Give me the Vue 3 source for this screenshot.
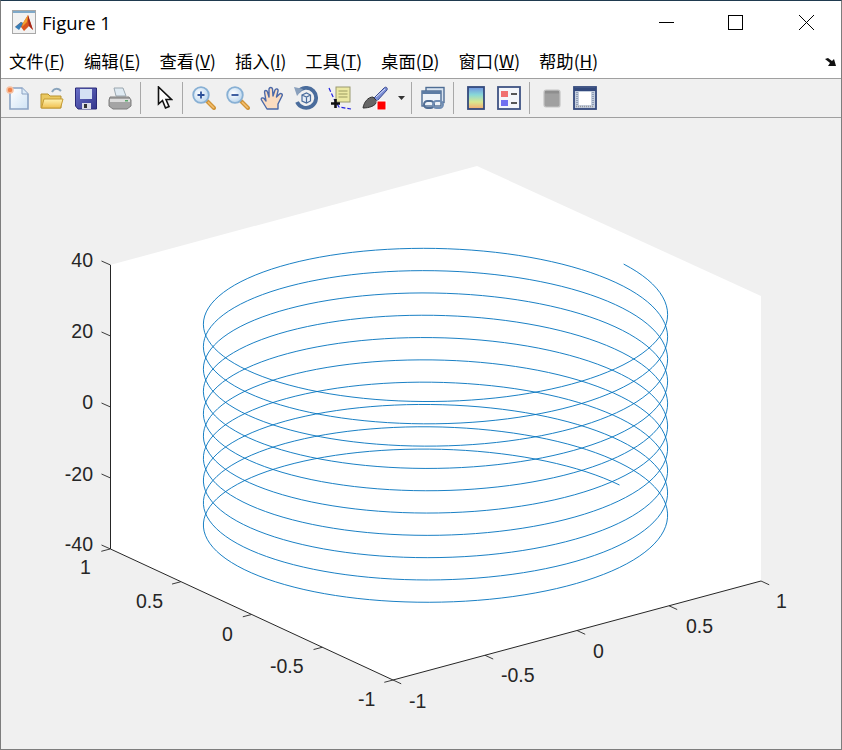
<template>
  <div class="window">
    <header class="titlebar">
      <svg class="logo" width="24" height="24" viewBox="0 0 24 24">
        <rect x="0.5" y="0.5" width="23" height="23" fill="#f2f2f2" stroke="#a8a8a8" />
        <rect x="1" y="1" width="22" height="2" fill="#7fa9c9" />
        <path d="M3 17 L9 12 L11 13 L16 5 L21 20 L17 16 L12 21 L9 17 Z" fill="#d9541e" />
        <path d="M3 17 L9 12 L11 13 L9 17 L7 20 Z" fill="#3a7fb8" />
        <path d="M16 5 L21 20 L17 16 L16 10 Z" fill="#a3281c" />
        <path d="M11 13 L16 5 L15 12 L10 17 Z" fill="#f0a030" />
      </svg>
      <span class="title">Figure 1</span>
      <div class="controls">
        <svg class="ctl" width="18" height="18" viewBox="0 0 18 18"><path d="M3 8.5 H18" stroke="#000" /></svg>
        <svg class="ctl" width="18" height="18" viewBox="0 0 18 18"><rect x="1.5" y="1.5" width="14" height="14" fill="none" stroke="#000" /></svg>
        <svg class="ctl" width="18" height="18" viewBox="0 0 18 18"><path d="M1 1 L16 16 M16 1 L1 16" stroke="#000" /></svg>
      </div>
    </header>

    <nav class="menubar">
      <span v-for="m in menus" :key="m.key" class="menu">{{ m.label }}(<u>{{ m.key }}</u>)</span>
      <svg class="dock" width="13" height="9" viewBox="0 0 13 9">
        <path d="M1 1 L4 0 L8 3 L10 1 L12 8 L4 8 L6 5 Z" fill="#111" />
      </svg>
    </nav>

    <div class="toolbar">
      <!-- new -->
      <svg class="tool" viewBox="0 0 24 24">
        <defs>
          <linearGradient id="pg" x1="0" y1="0" x2="1" y2="1"><stop offset="0" stop-color="#fff" /><stop offset="1" stop-color="#cfe3f5" /></linearGradient>
          <linearGradient id="fd" x1="0" y1="0" x2="0" y2="1"><stop offset="0" stop-color="#fff4b4" /><stop offset="1" stop-color="#f0c050" /></linearGradient>
          <linearGradient id="cb" x1="0" y1="0" x2="0" y2="1">
            <stop offset="0" stop-color="#6f90e0" /><stop offset="0.35" stop-color="#88d8d8" /><stop offset="0.68" stop-color="#d8e890" /><stop offset="1" stop-color="#f6a870" />
          </linearGradient>
          <radialGradient id="lens" cx="0.4" cy="0.4" r="0.7"><stop offset="0" stop-color="#fff" /><stop offset="1" stop-color="#b4d2ec" /></radialGradient>
          <linearGradient id="fl" x1="0" y1="0" x2="1" y2="1"><stop offset="0" stop-color="#6a70c8" /><stop offset="1" stop-color="#33368c" /></linearGradient>
        </defs>
        <path d="M4 2 H16 L22 8 V23 H4 Z" fill="url(#pg)" stroke="#8ba3c4" stroke-width="1.6" />
        <path d="M16 2 V8 H22" fill="#dcebf8" stroke="#8ba3c4" />
        <circle cx="4" cy="4" r="3" fill="#f0824a" stroke="#f6c0a0" stroke-width="1.5" />
      </svg>
      <!-- open -->
      <svg class="tool" viewBox="0 0 24 24">
        <path d="M12 6 C14 2 18 2 21 5" fill="none" stroke="#8aa4bc" stroke-width="2" />
        <path d="M1 8 H8 L10 10 H21 V22 H1 Z" fill="#eac860" stroke="#b8922e" />
        <path d="M1.5 22 L4 13 H23 L20.5 22 Z" fill="url(#fd)" stroke="#c49a34" />
      </svg>
      <!-- save -->
      <svg class="tool" viewBox="0 0 24 24">
        <path d="M1.5 2 H22.5 V23 H4 L1.5 20 Z" fill="url(#fl)" stroke="#2a2a78" />
        <rect x="6" y="3" width="12" height="10" fill="#d4e0f4" />
        <rect x="8" y="17" width="9" height="6" fill="#dcdce6" />
        <rect x="10" y="18" width="3" height="4" fill="#333" />
      </svg>
      <!-- print -->
      <svg class="tool" viewBox="0 0 24 24">
        <path d="M6 2 H15 L18 10 H8 Z" fill="#dfeaf2" stroke="#9aa6ae" />
        <path d="M2 11 H21 L23 14 V20 L19 23 H5 L1 20 V14 Z" fill="#a4a4a4" stroke="#7c7c7c" />
        <rect x="2" y="13" width="20" height="3" fill="#dcdcdc" />
        <rect x="17" y="14" width="3" height="1.5" fill="#5aa86a" />
      </svg>
      <i class="sep" />
      <!-- pointer -->
      <svg class="tool narrow" viewBox="0 0 16 24">
        <path d="M1.5 1 V18 L5.5 14.5 L8.5 22 L12 20.5 L9 13.5 H14.5 Z" fill="#fff" stroke="#111" stroke-width="1.6" />
      </svg>
      <i class="sep" />
      <!-- zoom in -->
      <svg class="tool" viewBox="0 0 24 24">
        <path d="M15 15 L22 22" stroke="#d09438" stroke-width="4" stroke-linecap="round" />
        <path d="M16 16 L22 22" stroke="#f6c070" stroke-width="1.5" />
        <circle cx="9" cy="9" r="7.8" fill="url(#lens)" stroke="#88b0d4" stroke-width="1.8" />
        <path d="M5.5 9 H12.5 M9 5.5 V12.5" stroke="#2c5098" stroke-width="1.8" />
      </svg>
      <!-- zoom out -->
      <svg class="tool" viewBox="0 0 24 24">
        <path d="M15 15 L22 22" stroke="#d09438" stroke-width="4" stroke-linecap="round" />
        <path d="M16 16 L22 22" stroke="#f6c070" stroke-width="1.5" />
        <circle cx="9" cy="9" r="7.8" fill="url(#lens)" stroke="#88b0d4" stroke-width="1.8" />
        <path d="M5.5 9 H12.5" stroke="#2c5098" stroke-width="1.8" />
      </svg>
      <!-- pan -->
      <svg class="tool" viewBox="0 0 24 24">
        <path d="M7 23 L1.5 14 C0.5 12 3 11 4.5 13 L6 15 L4.5 6 C4.5 4 7 4 7.5 6 L9 11 L9 3 C9.5 1 12 1 12.5 3 L13 10 L15 4 C16 2 18.5 3 18 5 L16.5 11 L19.5 8 C21 7 23 8 22 10 L18 18 V23 Z" fill="#fbdcc0" stroke="#4a68a8" stroke-width="1.4" stroke-linejoin="round" />
      </svg>
      <!-- rotate -->
      <svg class="tool" viewBox="0 0 24 24">
        <path d="M4 6 A10 10 0 1 1 3 16" fill="none" stroke="#4a6c9c" stroke-width="3.8" />
        <path d="M0 1 L9 3 L3 10 Z" fill="#8aa0bc" />
        <path d="M8 9 L12.5 7 L16.5 9 V15 L12.5 17 L8 15 Z M8 9 L12.5 11 L16.5 9 M12.5 11 V17" fill="#e8eef6" stroke="#4a6c9c" stroke-width="1.2" />
      </svg>
      <!-- data cursor -->
      <svg class="tool" viewBox="0 0 24 24">
        <path d="M1 2 L6 13 L11 21 L23 23" fill="none" stroke="#2020e0" stroke-width="1.2" stroke-dasharray="4 2" />
        <rect x="8" y="1" width="14" height="15" fill="#ece9a4" stroke="#9a9a70" />
        <path d="M10.5 5 H19.5 M10.5 8 H19.5 M10.5 11 H19.5" stroke="#9a9a60" />
        <path d="M7.5 13 V22 M3 17.5 H12" stroke="#111" stroke-width="2.6" />
      </svg>
      <!-- brush -->
      <svg class="tool wide" viewBox="0 0 28 24">
        <path d="M12 12 L22 2 C24 0 26 2 25 4 L15 15 Z" fill="#7a8ed6" stroke="#3a4a90" />
        <path d="M14 11 L23 3" stroke="#d8e0f8" />
        <path d="M1 22 C2 16 6 11 11 11 L15 15 C14 20 7 22 1 22 Z" fill="#666" stroke="#333" />
        <rect x="15" y="15" width="9" height="9" fill="#ff0000" stroke="#fff" />
      </svg>
      <svg class="caret" width="7" height="4" viewBox="0 0 7 4"><path d="M0 0 H7 L3.5 4 Z" fill="#333" /></svg>
      <i class="sep" />
      <!-- link -->
      <svg class="tool" viewBox="0 0 24 24">
        <rect x="5" y="1.5" width="18" height="15" fill="#d9e4f0" stroke="#4f6d94" stroke-width="1.4" />
        <rect x="1" y="5" width="19" height="15" fill="#eef3f8" stroke="#4f6d94" stroke-width="1.4" />
        <rect x="1" y="5" width="19" height="3" fill="#5c7ca4" />
        <rect x="3" y="15" width="10" height="7" rx="3.5" fill="none" stroke="#4f6d94" stroke-width="2" />
        <rect x="12" y="15" width="10" height="7" rx="3.5" fill="none" stroke="#6f8db4" stroke-width="2" />
      </svg>
      <i class="sep" />
      <!-- colorbar -->
      <svg class="tool slim" viewBox="0 0 18 24">
        <rect x="1" y="1" width="16" height="22" fill="url(#cb)" stroke="#33497c" stroke-width="1.8" />
      </svg>
      <!-- legend -->
      <svg class="tool" viewBox="0 0 24 24">
        <rect x="1" y="1" width="22" height="22" fill="#f4f6fa" stroke="#3f5383" stroke-width="1.8" />
        <rect x="4" y="5" width="7" height="6" fill="#f07070" />
        <rect x="4" y="14" width="7" height="6" fill="#7070f0" />
        <path d="M14 8 H20 M14 17 H20" stroke="#222" stroke-width="1.6" />
      </svg>
      <i class="sep" />
      <!-- hide tools -->
      <svg class="tool slim" viewBox="0 0 18 24">
        <rect x="1" y="4" width="16" height="17" rx="2" fill="#a0a0a0" stroke="#c4c4c4" stroke-width="1.2" />
        <rect x="2" y="5" width="14" height="2.5" fill="#8e8e8e" />
      </svg>
      <!-- plot tools -->
      <svg class="tool" viewBox="0 0 24 24">
        <rect x="1" y="1" width="22" height="22" fill="#c4cede" stroke="#33497c" stroke-width="1.8" />
        <rect x="1" y="2" width="22" height="3" fill="#33497c" />
        <rect x="6" y="6" width="12" height="13" fill="#fff" />
        <path d="M4 6 V19 M20 6 V19" stroke="#7f8ea8" stroke-width="1.5" stroke-dasharray="1 1" />
        <path d="M3 20.5 H21" stroke="#9a9a9a" stroke-width="1.5" stroke-dasharray="1 1" />
      </svg>
    </div>

    <svg class="plot" viewBox="1 118 840 631">
      <polygon points="110,265 477,166 761,296 761,581 393,680 110,549" fill="#fff" />
      <polyline :points="helix" fill="none" stroke="#0072bd" stroke-width="0.9" />
      <path d="M110.5 265 V549 L393 680 L761 581" fill="none" stroke="#262626" stroke-width="1" />
      <path v-for="(t, i) in ticks" :key="i" :d="t" fill="none" stroke="#262626" stroke-width="0.9" />
      <text v-for="l in labels" :key="l.text + l.x" :x="l.x" :y="l.y" :text-anchor="l.anchor" class="tick">{{ l.text }}</text>
    </svg>
  </div>
</template>

<script setup>
const menus = [
  { label: '文件', key: 'F' },
  { label: '编辑', key: 'E' },
  { label: '查看', key: 'V' },
  { label: '插入', key: 'I' },
  { label: '工具', key: 'T' },
  { label: '桌面', key: 'D' },
  { label: '窗口', key: 'W' },
  { label: '帮助', key: 'H' }
]

// projection read off the box corners
const project = (x, y, z) => [
  435.5 + 184 * x - 141.5 * y,
  565 - 49.5 * x - 65.5 * y - 3.55 * (z + 40)
]

const steps = 1200
const tStart = -10 * Math.PI
const tEnd = 10 * Math.PI - 0.03
const pts = []
for (let i = 0; i <= steps; i++) {
  const t = tStart + ((tEnd - tStart) * i) / steps
  const [px, py] = project(Math.cos(t), Math.sin(t), t)
  pts.push(px.toFixed(2) + ',' + py.toFixed(2))
}
const helix = pts.join(' ')

const ticks = []
for (const z of [40, 20, 0, -20, -40]) {
  const y = 549 - (z + 40) * 3.55
  ticks.push(`M110.5 ${y} L101.5 ${y - 4}`)
}
for (const v of [1, 0.5, 0, -0.5, -1]) {
  const [px, py] = project(-1, v, -40)
  ticks.push(`M${px} ${py} L${px - 8.7} ${py + 2.3}`)
}
for (const v of [-1, -0.5, 0, 0.5, 1]) {
  const [px, py] = project(v, -1, -40)
  ticks.push(`M${px} ${py} L${px + 8.2} ${py + 3.8}`)
}

const labels = [
  { text: '40', x: 93, y: 267, anchor: 'end' },
  { text: '20', x: 93, y: 338, anchor: 'end' },
  { text: '0', x: 93, y: 409, anchor: 'end' },
  { text: '-20', x: 93, y: 481, anchor: 'end' },
  { text: '-40', x: 93, y: 551, anchor: 'end' },
  { text: '1', x: 80, y: 574, anchor: 'start' },
  { text: '0.5', x: 136, y: 608, anchor: 'start' },
  { text: '0', x: 222, y: 641, anchor: 'start' },
  { text: '-0.5', x: 270, y: 673, anchor: 'start' },
  { text: '-1', x: 358, y: 706, anchor: 'start' },
  { text: '-1', x: 409, y: 708, anchor: 'start' },
  { text: '-0.5', x: 501, y: 682, anchor: 'start' },
  { text: '0', x: 593, y: 658, anchor: 'start' },
  { text: '0.5', x: 686, y: 633, anchor: 'start' },
  { text: '1', x: 776, y: 608, anchor: 'start' }
]
</script>

<style scoped>
.window {
  width: 842px;
  height: 750px;
  box-sizing: border-box;
  display: flex;
  flex-direction: column;
  background: #f0f0f0;
  border: 1px solid #7d7d7d;
  border-top-color: #1f3a4f;
  overflow: hidden;
}

.titlebar {
  height: 39px;
  flex: none;
  display: flex;
  align-items: center;
  padding-left: 11px;
  background: #fff;
}

.logo {
  margin-top: 3px;
}

.title {
  margin-left: 6px;
  margin-top: 3px;
  font: 18.5px "Open Sans", "Noto Sans", sans-serif;
  color: #000;
}

.controls {
  margin-left: auto;
  margin-top: 5px;
  display: flex;
  gap: 53px;
  padding-right: 25px;
}

.ctl {
  display: block;
}

.menubar {
  height: 39px;
  flex: none;
  display: flex;
  align-items: center;
  gap: 19px;
  padding: 3px 0 0 8px;
  box-sizing: border-box;
  background: #fff;
  border-bottom: 1px solid #a0a0a0;
  font: 17.33px "Noto Sans CJK SC", "Liberation Sans", sans-serif;
  color: #000;
}

.menu {
  white-space: nowrap;
}

.dock {
  margin-left: auto;
  margin-right: 4px;
  margin-top: 3px;
}

.toolbar {
  height: 39px;
  flex: none;
  box-sizing: border-box;
  display: flex;
  align-items: center;
  gap: 10px;
  padding-left: 5px;
  background: #f0f0f0;
  border-bottom: 1px solid #a0a0a0;
}

.tool {
  width: 24px;
  height: 24px;
  flex: none;
  filter: blur(0.35px);
}

.tool.narrow {
  width: 16px;
  margin: 0 1px 0 7px;
}

.tool.wide {
  width: 28px;
}

.tool.slim {
  width: 18px;
  margin: 0 2px 0 4px;
}

.caret {
  margin-left: -2px;
  margin-right: -2px;
}

.sep {
  width: 1px;
  height: 32px;
  flex: none;
  margin: 0 -1px 0 -2px;
  background: #a8a8a8;
}

.plot {
  display: block;
  width: 840px;
  height: 631px;
  flex: none;
}

.tick {
  font: 19.5px "Liberation Sans", Arial, sans-serif;
  fill: #262626;
}
</style>
